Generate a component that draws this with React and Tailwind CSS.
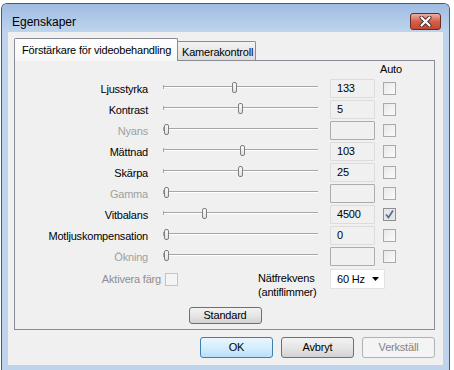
import React from "react";

const rows = [
  { label: "Ljusstyrka", thumb: 69, value: "133" },
  { label: "Kontrast", thumb: 75, value: "5" },
  { label: "Nyans", disabled: true },
  { label: "Mättnad", thumb: 77, value: "103" },
  { label: "Skärpa", thumb: 75, value: "25" },
  { label: "Gamma", disabled: true },
  { label: "Vitbalans", thumb: 39, value: "4500", checked: true },
  { label: "Motljuskompensation", thumb: 1, value: "0" },
  { label: "Ökning", disabled: true },
];

const Slider = ({ thumb = 1 }) => (
  <div className="relative w-[155px] h-[21px]">
    <div className="absolute left-0 right-0 top-[8px] h-[2px] border-t border-[#a6a6a6] bg-white" />
    <div className="absolute left-0 top-[7px] w-[1px] h-[4px] bg-[#a6a6a6]" />
    {/* thumb */}
    <div
      className="absolute top-[4px] w-[5px] h-[11px] rounded-[2px] border border-[#7f7f7f] bg-gradient-to-b from-[#fafafa] to-[#e0e0e0]"
      style={{ left: thumb }}
    />
  </div>
);

const Checkbox = ({ checked, faded }) => (
  <div
    className={`w-[13px] h-[13px] border flex items-center justify-center ${
      faded ? "border-[#c4c4c4] bg-[#f4f4f4]" : checked ? "border-[#8f8f8f] bg-[#e6e6e6]" : "border-[#a9a9a9] bg-gradient-to-br from-[#e8e8e8] to-[#fbfbfb]"
    }`}
  >
    {checked && (
      <svg width="11" height="11" viewBox="0 0 11 11">
        <path d="M2 5.5 L4.5 8.5 L9 1.5" fill="none" stroke="#5a6d9e" strokeWidth="1.8" />
      </svg>
    )}
  </div>
);

const Button = ({ children, variant = "normal", className = "" }) => {
  const styles = {
    normal: "border-[#707070] bg-gradient-to-b from-[#f2f2f2] via-[#e6e6e6] to-[#d2d2d2] text-black",
    focus: "border-[#3c7fb1] bg-gradient-to-b from-[#eaf6fd] via-[#d5eefc] to-[#b7e0f8] text-black",
    disabled: "border-[#adb2b5] bg-[#f4f4f4] text-[#838383]",
  };
  return (
    <div
      className={`flex items-center justify-center rounded-[3px] border ${styles[variant]} ${className}`}
    >
      {children}
    </div>
  );
};

export default function App() {
  return (
    <div className="w-[454px] h-[370px] bg-white overflow-hidden font-['Segoe_UI','Liberation_Sans',Arial,sans-serif] text-[11px] tracking-[-0.2px] text-black">
      <div className="ml-[1px] mt-[3px] w-[449px] h-[367px] rounded-t-[6px] border border-b-0 border-[#4d5a6b] bg-[#bed4ec] flex flex-col">
        {/* title bar */}
        <div className="h-[28px] flex items-start justify-between pl-[10px] pr-[8px] rounded-t-[5px] bg-gradient-to-b from-[#9fbce2] to-[#bed4ec]">
          <span className="mt-[11px] text-[12px] leading-[14px] tracking-normal">Egenskaper</span>
          <div className="mt-[9px] w-[31px] h-[17px] rounded-[3px] border border-[#6b2a22] bg-gradient-to-b from-[#eab0a0] via-[#d2604a] to-[#c9462f] flex items-center justify-center">
            <svg width="13" height="11" viewBox="0 0 13 11">
              <path d="M2.5 1.5 L10.5 9.5 M10.5 1.5 L2.5 9.5" stroke="#4a2a2a" strokeWidth="4" strokeLinecap="round" />
              <path d="M2.5 1.5 L10.5 9.5 M10.5 1.5 L2.5 9.5" stroke="#ffffff" strokeWidth="2.2" strokeLinecap="round" />
            </svg>
          </div>
        </div>

        {/* client area */}
        <div className="ml-[6px] w-[435px] h-[333px] bg-[#f0f0f0] pl-[6px] pr-[8px] pt-[6px]">
          {/* tabs */}
          <div className="flex items-end h-[22px]">
            <div className="relative z-10 mb-[-1px] w-[164px] h-[23px] border border-b-0 border-[#898c95] rounded-t-[2px] bg-gradient-to-b from-white to-[#f7f7f7] pl-[7px] pt-[4px] leading-[14px] whitespace-nowrap">
              Förstärkare för videobehandling
            </div>
            <div className="w-[78px] h-[19px] border border-l-0 border-b-0 border-[#898c95] rounded-tr-[2px] bg-gradient-to-b from-[#f3f3f3] to-[#dddddd] pl-[4px] pt-[3px] leading-[14px] whitespace-nowrap">
              Kamerakontroll
            </div>
          </div>

          {/* panel */}
          <div className="w-[421px] h-[270px] border border-[#898c95] bg-[#f0f0f0] flex flex-col">
            <div className="h-[17px] pl-[365px] pt-[2px] leading-[13px]">Auto</div>

            {rows.map((r) => (
              <div key={r.label} className="flex items-center h-[21px]">
                <div className={`w-[133px] text-right leading-[14px] ${r.disabled ? "text-[#a0a0a0]" : "text-black"}`}>
                  {r.label}
                </div>
                <div className="ml-[15px]">
                  <Slider thumb={r.thumb} />
                </div>
                <div
                  className={`ml-[12px] w-[45px] h-[19px] flex items-center pl-[6px] rounded-[1px] border ${
                    r.disabled ? "border-[#acacac]" : "border-[#dcdcdc]"
                  }`}
                >
                  {r.value}
                </div>
                <div className="ml-[8px]">
                  <Checkbox checked={r.checked} />
                </div>
              </div>
            ))}

            <div className="flex items-start mt-[2px]">
              <div className="w-[163px] h-[20px] flex items-center justify-end gap-[4px]">
                <span className="text-[#8e8e8e]">Aktivera färg</span>
                <Checkbox faded />
              </div>
              <div className="ml-[80px] mt-[2px] leading-[14px] w-[72px]">
                <div>Nätfrekvens</div>
                <div>(antiflimmer)</div>
              </div>
              <div className="w-[55px] h-[20px] border border-[#e2e2e2] bg-white flex items-center justify-between pl-[6px] pr-[5px]">
                <span>60 Hz</span>
                <svg width="7" height="4" viewBox="0 0 7 4">
                  <path d="M0 0 H7 L3.5 4 Z" fill="#000" />
                </svg>
              </div>
            </div>

            <div className="flex justify-center mt-[8px]">
              <Button className="w-[73px] h-[17px] ml-[1px]">Standard</Button>
            </div>
          </div>

          {/* dialog buttons */}
          <div className="flex justify-end gap-[8px] mt-[7px]">
            <Button variant="focus" className="w-[73px] h-[21px]">OK</Button>
            <Button className="w-[73px] h-[21px]">Avbryt</Button>
            <Button variant="disabled" className="w-[73px] h-[21px]">Verkställ</Button>
          </div>
        </div>
      </div>
    </div>
  );
}
